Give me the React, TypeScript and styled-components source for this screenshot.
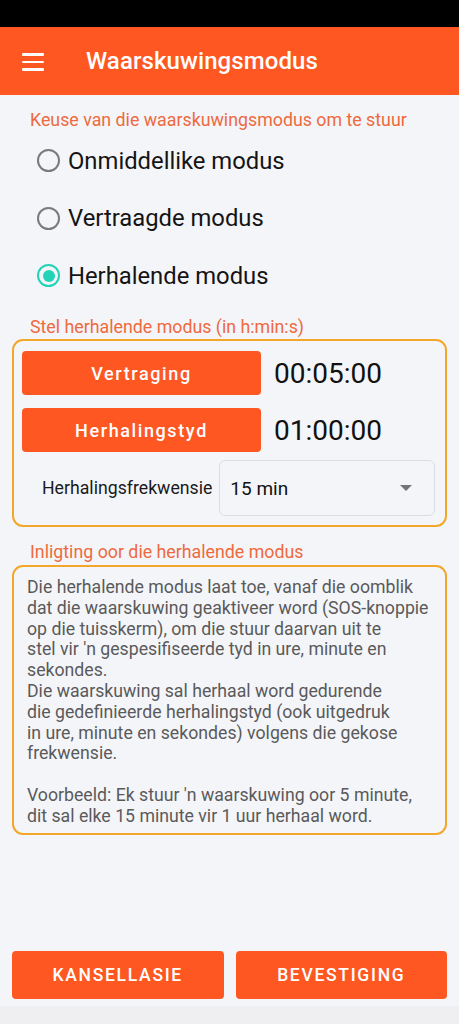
import React from "react";
import styled, { createGlobalStyle } from "styled-components";

const Global = createGlobalStyle`
  html, body { margin: 0; padding: 0; }
  body {
    background: #F4F5F9;
    font-family: Roboto, "Noto Sans", "Liberation Sans", sans-serif;
  }
  * { box-sizing: border-box; }
`;

const Page = styled.div`
  min-height: 1024px;
  display: flex;
  flex-direction: column;
  background: #F4F5F9;
`;

const StatusBar = styled.div`
  height: 27px;
  background: #000;
`;

const Toolbar = styled.header`
  height: 68px;
  background: #FF5722;
  display: flex;
  align-items: center;
  padding-left: 22px;
  gap: 42px;
`;

const MenuButton = styled.div`
  width: 22px;
  display: flex;
  flex-direction: column;
  gap: 5px;
  margin-top: 2px;
`;

const MenuLine = styled.span`
  display: block;
  height: 2.4px;
  background: #fff;
  border-radius: 1px;
`;

const Title = styled.h1`
  margin: 0;
  color: #fff;
  font-size: 24px;
  font-weight: 500;
  letter-spacing: 0.1px;
`;

const Content = styled.main`
  flex: 1;
  display: flex;
  flex-direction: column;
  padding-top: 15px;
`;

const SectionLabel = styled.div<{ $top?: number }>`
  margin: ${(p) => p.$top ?? 0}px 0 0 30px;
  height: 20px;
  line-height: 20px;
  font-size: 17.8px;
  color: #EE6A3E;
  white-space: nowrap;
`;

const RadioGroup = styled.div`
  display: flex;
  flex-direction: column;
  padding-left: 37px;
  margin-top: 2px;
`;

const RadioRow = styled.label`
  height: 57.5px;
  display: flex;
  align-items: center;
  gap: 8px;
  font-size: 23.8px;
  color: #141414;
`;

const RadioCircle = styled.span<{ $checked?: boolean }>`
  width: 23px;
  height: 23px;
  border-radius: 50%;
  border: 2.5px solid ${(p) => (p.$checked ? "#22D3B8" : "#7A7A7A")};
  display: flex;
  align-items: center;
  justify-content: center;
  &::after {
    content: "";
    width: 12px;
    height: 12px;
    border-radius: 50%;
    background: ${(p) => (p.$checked ? "#22D3B8" : "transparent")};
  }
`;

const Frame = styled.section<{ $top?: number }>`
  margin: ${(p) => p.$top ?? 0}px 12px 0 12px;
  border: 2px solid #F3A72A;
  border-radius: 11px;
`;

const SettingsFrame = styled(Frame)`
  padding: 10px 10px 9px 8px;
  display: flex;
  flex-direction: column;
`;

const TimeRow = styled.div<{ $top?: number }>`
  display: flex;
  align-items: center;
  gap: 13px;
  margin-top: ${(p) => p.$top ?? 0}px;
`;

const OrangeButton = styled.button`
  border: none;
  background: #FF5722;
  color: #fff;
  font-family: Roboto, "Noto Sans", sans-serif;
  font-weight: 500;
  border-radius: 4px;
  cursor: pointer;
  padding: 0;
`;

const TimeButton = styled(OrangeButton)`
  width: 239px;
  height: 44px;
  font-size: 18px;
  letter-spacing: 1.6px;
`;

const TimeValue = styled.span`
  font-size: 28px;
  color: #111;
`;

const FreqRow = styled.div`
  margin-top: 8px;
  display: flex;
  align-items: center;
  padding-left: 20px;
  gap: 7px;
`;

const FreqLabel = styled.span`
  font-size: 17.7px;
  color: #1a1a1a;
`;

const Select = styled.div`
  flex: 1;
  height: 56px;
  border: 1px solid #DCDDE2;
  border-radius: 6px;
  display: flex;
  align-items: center;
  justify-content: space-between;
  padding: 0 22px 0 10px;
  font-size: 19px;
  color: #111;
`;

const Caret = styled.span`
  width: 0;
  height: 0;
  border-left: 6px solid transparent;
  border-right: 6px solid transparent;
  border-top: 6px solid #757575;
`;

const InfoFrame = styled(Frame)`
  padding: 10px 6px 6px 13px;
`;

const InfoText = styled.p`
  margin: 0;
  font-size: 17.7px;
  line-height: 20.8px;
  color: #5A5A5A;
  white-space: nowrap;
`;

const Footer = styled.footer`
  display: grid;
  grid-template-columns: 1fr 1fr;
  gap: 12px;
  padding: 0 12px;
  margin-bottom: 7px;
`;

const FooterButton = styled(OrangeButton)`
  height: 48px;
  font-size: 17.5px;
  letter-spacing: 1.7px;
  text-transform: uppercase;
`;

const NavBar = styled.div`
  height: 18px;
  background: #EFEFF1;
`;

const infoLines = [
  "Die herhalende modus laat toe, vanaf die oomblik",
  "dat die waarskuwing geaktiveer word (SOS-knoppie",
  "op die tuisskerm), om die stuur daarvan uit te",
  "stel vir 'n gespesifiseerde tyd in ure, minute en",
  "sekondes.",
  "Die waarskuwing sal herhaal word gedurende",
  "die gedefinieerde herhalingstyd (ook uitgedruk",
  "in ure, minute en sekondes) volgens die gekose",
  "frekwensie.",
  "",
  "Voorbeeld: Ek stuur 'n waarskuwing oor 5 minute,",
  "dit sal elke 15 minute vir 1 uur herhaal word.",
];

const modes = [
  { label: "Onmiddellike modus", checked: false },
  { label: "Vertraagde modus", checked: false },
  { label: "Herhalende modus", checked: true },
];

export default function App() {
  return (
    <Page>
      <Global />
      <StatusBar />
      <Toolbar>
        <MenuButton>
          <MenuLine />
          <MenuLine />
          <MenuLine />
        </MenuButton>
        <Title>Waarskuwingsmodus</Title>
      </Toolbar>
      <Content>
        <SectionLabel>Keuse van die waarskuwingsmodus om te stuur</SectionLabel>
        <RadioGroup>
          {modes.map((m) => (
            <RadioRow key={m.label}>
              <RadioCircle $checked={m.checked} />
              {m.label}
            </RadioRow>
          ))}
        </RadioGroup>
        <SectionLabel $top={12.5}>Stel herhalende modus (in h:min:s)</SectionLabel>
        <SettingsFrame $top={2}>
          <TimeRow>
            <TimeButton>Vertraging</TimeButton>
            <TimeValue>00:05:00</TimeValue>
          </TimeRow>
          <TimeRow $top={13}>
            <TimeButton>Herhalingstyd</TimeButton>
            <TimeValue>01:00:00</TimeValue>
          </TimeRow>
          <FreqRow>
            <FreqLabel>Herhalingsfrekwensie</FreqLabel>
            <Select>
              <span>15 min</span>
              <Caret />
            </Select>
          </FreqRow>
        </SettingsFrame>
        <SectionLabel $top={15}>Inligting oor die herhalende modus</SectionLabel>
        <InfoFrame $top={3}>
          {infoLines.map((l, i) => (
            <InfoText key={i}>{l || "\u00a0"}</InfoText>
          ))}
        </InfoFrame>
      </Content>
      <Footer>
        <FooterButton>Kansellasie</FooterButton>
        <FooterButton>Bevestiging</FooterButton>
      </Footer>
      <NavBar />
    </Page>
  );
}
